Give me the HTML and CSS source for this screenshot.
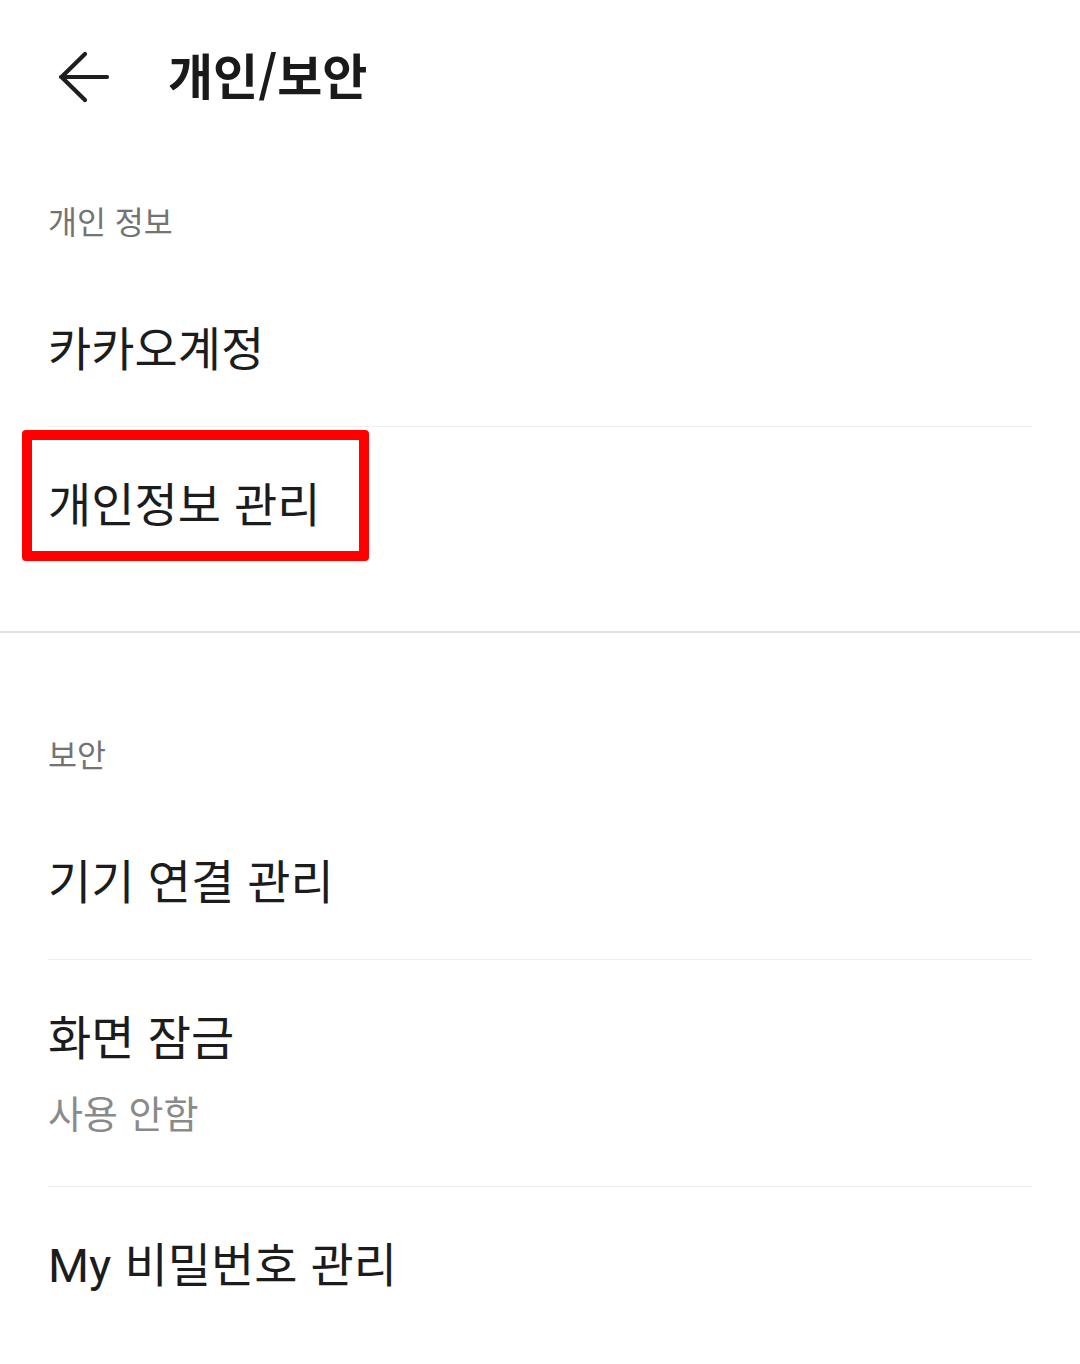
FILE: index.html
```html
<!DOCTYPE html>
<html lang="ko">
<head>
<meta charset="utf-8">
<title>개인/보안</title>
<link rel="stylesheet" href="styles.css">
</head>
<body>
<header class="app-bar">
  <svg class="back" width="52" height="52" viewBox="0 0 52 52" aria-hidden="true">
    <path d="M3 26 H49 M27 3 L3.5 26 L27 49" fill="none" stroke="#1e1e1e" stroke-width="4.2" stroke-linecap="round" stroke-linejoin="round"/>
  </svg>
  <h1 class="title">개인/보안</h1>
</header>

<section class="section first">
  <div class="section-label">개인 정보</div>
  <ul class="list">
    <li class="row"><span class="row-title">카카오계정</span></li>
    <li class="row marked"><span class="row-title">개인정보 관리</span><span class="highlight"></span></li>
  </ul>
</section>

<div class="divider"></div>

<section class="section second">
  <div class="section-label">보안</div>
  <ul class="list">
    <li class="row"><span class="row-title">기기 연결 관리</span></li>
    <li class="row"><span class="row-title">화면 잠금</span><span class="row-sub">사용 안함</span></li>
    <li class="row"><span class="row-title"><span class="latin">My</span> 비밀번호 관리</span></li>
  </ul>
</section>
</body>
</html>
```

FILE: styles.css
```css
html, body {
  margin: 0;
  padding: 0;
  background: #ffffff;
}

body {
  width: 1080px;
  font-family: "Noto Sans CJK KR", "Noto Sans", sans-serif;
  color: #1c1c1c;
}

.app-bar {
  height: 154px;
  display: flex;
  align-items: center;
  padding-left: 58px;
  box-sizing: border-box;
}

.back {
  display: block;
  flex: 0 0 auto;
}

.title {
  margin: 0 0 0 58px;
  padding-bottom: 6px;
  font-size: 49px;
  line-height: 60px;
  font-weight: 700;
  color: #1a1a1a;
}

.section {
  padding: 0 48px;
}

.section.first {
  padding-bottom: 49px;
}

.section.second {
  padding-top: 54px;
}

.section-label {
  padding-top: 44px;
  padding-bottom: 29px;
  font-size: 31.5px;
  line-height: 44px;
  color: #737373;
}

.list {
  list-style: none;
  margin: 0;
  padding: 0;
}

.row {
  position: relative;
  display: flex;
  flex-direction: column;
  padding: 45px 0 50px 0;
  border-bottom: 1px solid #efefef;
}

.row:last-child {
  border-bottom: none;
}

.row-title {
  font-size: 47px;
  line-height: 60px;
  color: #1c1c1c;
}

.row-sub {
  margin-top: 23px;
  font-size: 38px;
  line-height: 48px;
  color: #8a8a8a;
}

.latin {
  font-family: Roboto, "Noto Sans", sans-serif;
}

.divider {
  height: 2px;
  background: #e2e2e2;
}

.highlight {
  position: absolute;
  left: -26px;
  top: 3px;
  width: 347px;
  height: 131px;
  box-sizing: border-box;
  border: 10px solid #ff0000;
  border-radius: 4px;
}
```
